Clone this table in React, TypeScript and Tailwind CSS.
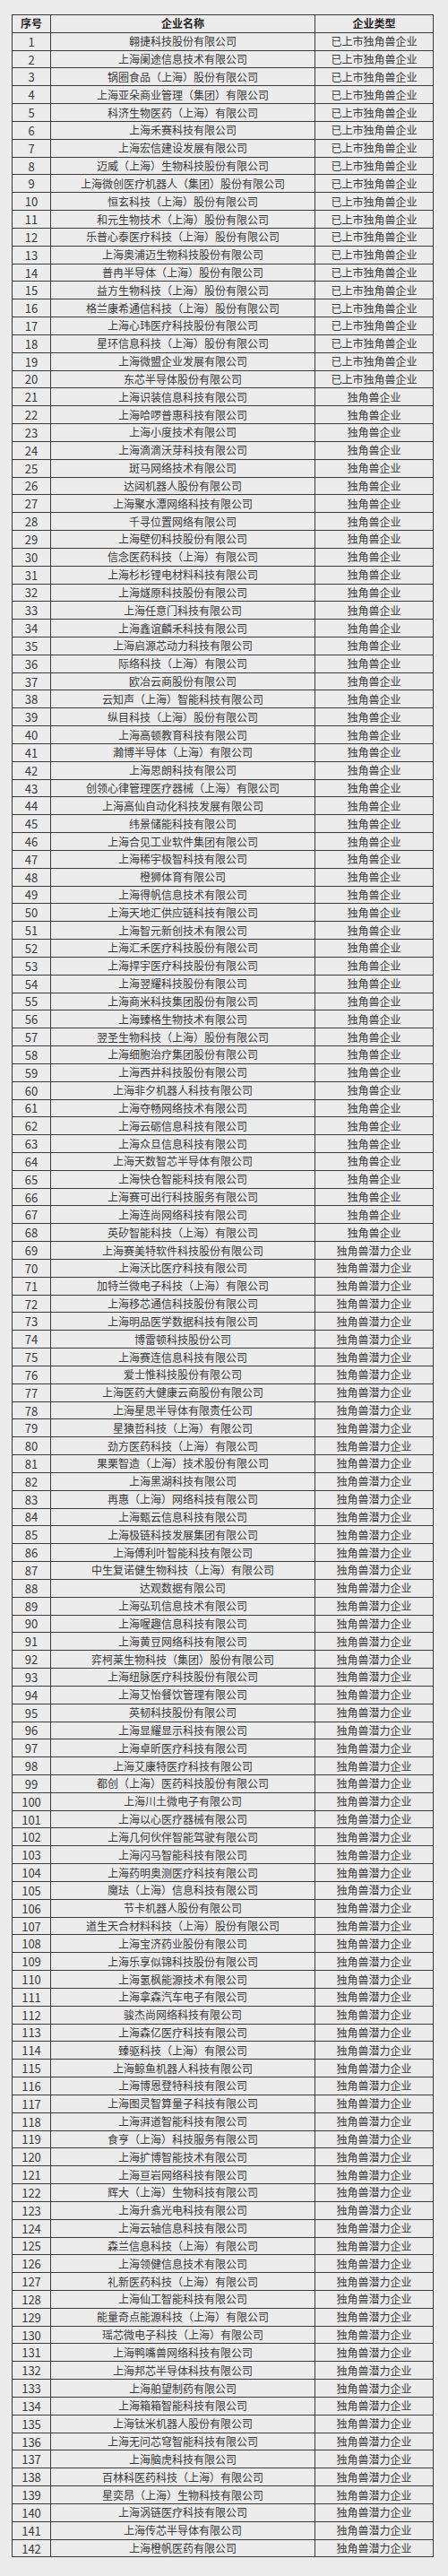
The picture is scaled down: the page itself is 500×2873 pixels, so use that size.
import React from "react";

const names: string[] = [
  "翱捷科技股份有限公司",
  "上海阑途信息技术有限公司",
  "锅圈食品（上海）股份有限公司",
  "上海亚朵商业管理（集团）有限公司",
  "科济生物医药（上海）有限公司",
  "上海禾赛科技有限公司",
  "上海宏信建设发展有限公司",
  "迈威（上海）生物科技股份有限公司",
  "上海微创医疗机器人（集团）股份有限公司",
  "恒玄科技（上海）股份有限公司",
  "和元生物技术（上海）股份有限公司",
  "乐普心泰医疗科技（上海）股份有限公司",
  "上海奥浦迈生物科技股份有限公司",
  "普冉半导体（上海）股份有限公司",
  "益方生物科技（上海）股份有限公司",
  "格兰康希通信科技（上海）股份有限公司",
  "上海心玮医疗科技股份有限公司",
  "星环信息科技（上海）股份有限公司",
  "上海微盟企业发展有限公司",
  "东芯半导体股份有限公司",
  "上海识装信息科技有限公司",
  "上海哈啰普惠科技有限公司",
  "上海小度技术有限公司",
  "上海滴滴沃芽科技有限公司",
  "斑马网络技术有限公司",
  "达闼机器人股份有限公司",
  "上海聚水潭网络科技有限公司",
  "千寻位置网络有限公司",
  "上海壁仞科技股份有限公司",
  "信念医药科技（上海）有限公司",
  "上海杉杉锂电材料科技有限公司",
  "上海燧原科技股份有限公司",
  "上海任意门科技有限公司",
  "上海鑫谊麟禾科技有限公司",
  "上海启源芯动力科技有限公司",
  "际络科技（上海）有限公司",
  "欧冶云商股份有限公司",
  "云知声（上海）智能科技有限公司",
  "纵目科技（上海）股份有限公司",
  "上海高顿教育科技有限公司",
  "瀚博半导体（上海）有限公司",
  "上海思朗科技有限公司",
  "创领心律管理医疗器械（上海）有限公司",
  "上海高仙自动化科技发展有限公司",
  "纬景储能科技有限公司",
  "上海合见工业软件集团有限公司",
  "上海稀宇极智科技有限公司",
  "橙狮体育有限公司",
  "上海得帆信息技术有限公司",
  "上海天地汇供应链科技有限公司",
  "上海智元新创技术有限公司",
  "上海汇禾医疗科技股份有限公司",
  "上海捍宇医疗科技股份有限公司",
  "上海翌耀科技股份有限公司",
  "上海商米科技集团股份有限公司",
  "上海臻格生物技术有限公司",
  "翌圣生物科技（上海）股份有限公司",
  "上海细胞治疗集团股份有限公司",
  "上海西井科技股份有限公司",
  "上海非夕机器人科技有限公司",
  "上海夺畅网络技术有限公司",
  "上海云砺信息科技有限公司",
  "上海众旦信息科技有限公司",
  "上海天数智芯半导体有限公司",
  "上海快仓智能科技有限公司",
  "上海赛可出行科技服务有限公司",
  "上海连尚网络科技有限公司",
  "英矽智能科技（上海）有限公司",
  "上海赛美特软件科技股份有限公司",
  "上海沃比医疗科技有限公司",
  "加特兰微电子科技（上海）有限公司",
  "上海移芯通信科技股份有限公司",
  "上海明品医学数据科技有限公司",
  "博雷顿科技股份公司",
  "上海赛连信息科技有限公司",
  "爱士惟科技股份有限公司",
  "上海医药大健康云商股份有限公司",
  "上海星思半导体有限责任公司",
  "星猿哲科技（上海）有限公司",
  "劲方医药科技（上海）有限公司",
  "果栗智造（上海）技术股份有限公司",
  "上海黑湖科技有限公司",
  "再惠（上海）网络科技有限公司",
  "上海甄云信息科技有限公司",
  "上海极链科技发展集团有限公司",
  "上海傅利叶智能科技有限公司",
  "中生复诺健生物科技（上海）有限公司",
  "达观数据有限公司",
  "上海弘玑信息技术有限公司",
  "上海喔趣信息科技有限公司",
  "上海黄豆网络科技有限公司",
  "弈柯莱生物科技（集团）股份有限公司",
  "上海纽脉医疗科技股份有限公司",
  "上海艾怡餐饮管理有限公司",
  "英韧科技股份有限公司",
  "上海显耀显示科技有限公司",
  "上海卓昕医疗科技有限公司",
  "上海艾康特医疗科技有限公司",
  "都创（上海）医药科技股份有限公司",
  "上海川土微电子有限公司",
  "上海以心医疗器械有限公司",
  "上海几何伙伴智能驾驶有限公司",
  "上海闪马智能科技有限公司",
  "上海药明奥测医疗科技有限公司",
  "魔珐（上海）信息科技有限公司",
  "节卡机器人股份有限公司",
  "道生天合材料科技（上海）股份有限公司",
  "上海宝济药业股份有限公司",
  "上海乐享似锦科技股份有限公司",
  "上海氢枫能源技术有限公司",
  "上海拿森汽车电子有限公司",
  "骏杰尚网络科技有限公司",
  "上海森亿医疗科技有限公司",
  "臻驱科技（上海）有限公司",
  "上海鲸鱼机器人科技有限公司",
  "上海博恩登特科技有限公司",
  "上海图灵智算量子科技有限公司",
  "上海湃道智能科技有限公司",
  "食亨（上海）科技服务有限公司",
  "上海扩博智能技术有限公司",
  "上海亘岩网络科技有限公司",
  "辉大（上海）生物科技有限公司",
  "上海升翕光电科技有限公司",
  "上海云轴信息科技有限公司",
  "森兰信息科技（上海）有限公司",
  "上海领健信息技术有限公司",
  "礼新医药科技（上海）有限公司",
  "上海仙工智能科技有限公司",
  "能量奇点能源科技（上海）有限公司",
  "瑶芯微电子科技（上海）有限公司",
  "上海鸭嘴兽网络科技有限公司",
  "上海邦芯半导体科技有限公司",
  "上海舶望制药有限公司",
  "上海箱箱智能科技有限公司",
  "上海钛米机器人股份有限公司",
  "上海无问芯穹智能科技有限公司",
  "上海脑虎科技有限公司",
  "百林科医药科技（上海）有限公司",
  "星奕昂（上海）生物科技有限公司",
  "上海涡链医疗科技有限公司",
  "上海传芯半导体有限公司",
  "上海橙帆医药有限公司",
];

function typeOf(i: number): string {
  if (i <= 20) return "已上市独角兽企业";
  if (i <= 68) return "独角兽企业";
  return "独角兽潜力企业";
}

const font = { fontFamily: '"Noto Sans CJK SC", "Noto Sans", sans-serif' };

function Row({ a, b, c, head }: { a: string; b: string; c: string; head?: boolean }) {
  const txt = head ? "font-bold text-[#222]" : "text-[#3a3a3a]";
  return (
    <div className={`grid grid-cols-[43px_295px_132px] h-[19.84px] border-b border-[#3b3b3b] text-[12px] leading-none ${txt}`}>
      <div className={`flex items-center justify-center border-r border-[#3b3b3b] ${head ? "" : "text-[13px]"}`}>{a}</div>
      <div className="flex items-center justify-center border-r border-[#3b3b3b] whitespace-nowrap">{b}</div>
      <div className="flex items-center justify-center border-r border-[#3b3b3b] whitespace-nowrap">{c}</div>
    </div>
  );
}

export default function App() {
  return (
    <div className="w-[500px] h-[2873px] bg-[#ececec] pt-[16px] pl-[13px]" style={font}>
      <div className="w-[471px] border-l border-t border-[#3b3b3b] bg-[#ececec]">
        <Row a="序号" b="企业名称" c="企业类型" head />
        {names.map((n, i) => (
          <Row key={i} a={String(i + 1)} b={n} c={typeOf(i + 1)} />
        ))}
      </div>
    </div>
  );
}
